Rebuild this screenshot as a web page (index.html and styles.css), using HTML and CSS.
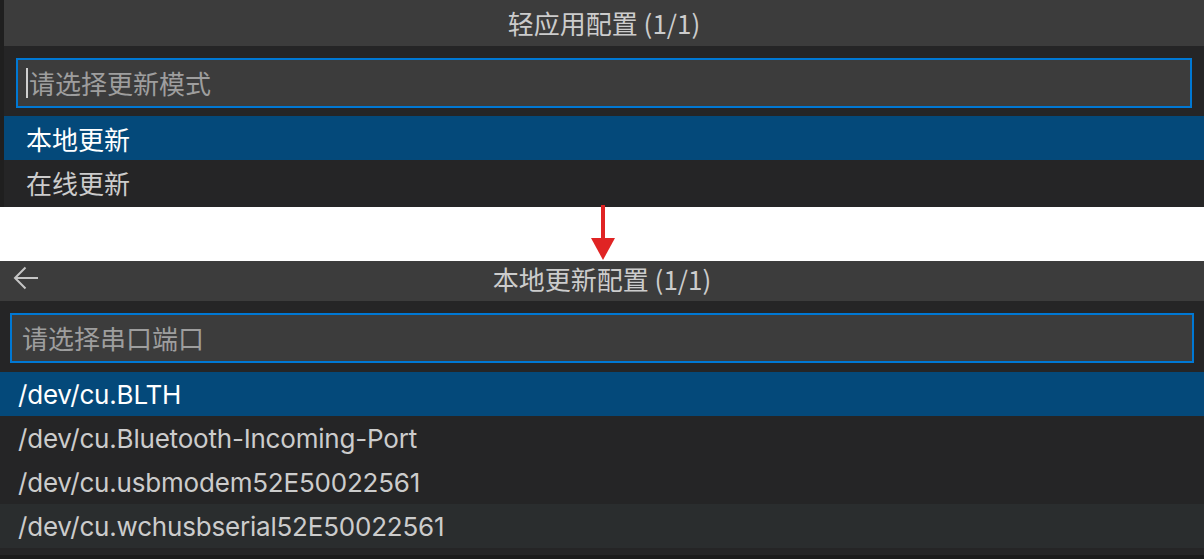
FILE: index.html
```html
<!DOCTYPE html>
<html lang="zh-CN">
<head>
<meta charset="utf-8">
<title>轻应用配置</title>
<link rel="stylesheet" href="styles.css">
</head>
<body>
<div class="stage">
  <div class="frame-top">
    <section class="panel panel-top">
      <header class="titlebar titlebar-top">
        <span class="title">轻应用配置 (1/1)</span>
      </header>
      <div class="filter filter-top">
        <div class="input">
          <span class="caret"></span>
          <span class="placeholder">请选择更新模式</span>
        </div>
      </div>
      <ul class="list">
        <li class="row selected">本地更新</li>
        <li class="row">在线更新</li>
      </ul>
    </section>
  </div>

  <div class="gap">
    <svg class="flow-arrow" width="26" height="56" viewBox="0 0 26 56" aria-hidden="true">
      <rect x="11" y="0" width="4" height="34" fill="#e02424"/>
      <polygon points="1,33 25,33 13,55" fill="#e02424"/>
    </svg>
  </div>

  <section class="panel panel-bottom">
    <header class="titlebar titlebar-bottom">
      <svg class="back" width="28" height="24" viewBox="0 0 28 24" aria-hidden="true">
        <path d="M26 12 H3 M13.5 1.5 L3 12 L13.5 22.5" fill="none" stroke="#c5c5c5" stroke-width="2" stroke-linejoin="miter"/>
      </svg>
      <span class="title">本地更新配置 (1/1)</span>
    </header>
    <div class="filter filter-bottom">
      <div class="input">
        <span class="placeholder">请选择串口端口</span>
      </div>
    </div>
    <ul class="list list-bottom">
      <li class="row row-latin selected">/dev/cu.BLTH</li>
      <li class="row row-latin">/dev/cu.Bluetooth-Incoming-Port</li>
      <li class="row row-latin">/dev/cu.usbmodem52E50022561</li>
      <li class="row row-latin hover">/dev/cu.wchusbserial52E50022561</li>
    </ul>
  </section>
</div>
</body>
</html>
```

FILE: styles.css
```css
* {
  box-sizing: border-box;
}

html, body {
  margin: 0;
  padding: 0;
  background: #ffffff;
}

body {
  width: 1204px;
  height: 559px;
  overflow: hidden;
  font-family: "Inter", "Noto Sans CJK SC", sans-serif;
  font-size: 26px;
  color: #cccccc;
}

.stage {
  display: flex;
  flex-direction: column;
  width: 1204px;
}

.frame-top {
  background: #1f1f1f;
  padding-left: 4px;
}

.panel {
  background: #252526;
  display: flex;
  flex-direction: column;
}

.panel-top {
  height: 207px;
  padding-bottom: 3px;
}

.panel-bottom {
  height: 298px;
  padding-bottom: 7px;
  border-bottom: 4px solid #1b1b1b;
}

.titlebar {
  position: relative;
  display: flex;
  align-items: center;
  justify-content: center;
  background: #3c3c3c;
  color: #cccccc;
}

.titlebar-top {
  height: 46px;
}

.titlebar-bottom {
  height: 40px;
  padding-bottom: 4px;
}

.title {
  font-family: "Noto Sans CJK SC", "Inter", sans-serif;
  line-height: 30px;
  white-space: nowrap;
}

.back {
  position: absolute;
  left: 12px;
  top: 5px;
}

.filter-top {
  padding: 12px 12px 8px;
}

.filter-bottom {
  padding: 12px 10px 9px;
}

.input {
  height: 50px;
  border: 2px solid #0078d4;
  background: #3c3c3c;
  display: flex;
  align-items: center;
  padding-left: 8px;
}

.filter-bottom .input {
  padding-left: 10px;
}

.caret {
  width: 2px;
  height: 30px;
  background: #d0d0d0;
  margin-right: 1px;
}

.placeholder {
  font-family: "Noto Sans CJK SC", sans-serif;
  color: #9e9e9e;
  line-height: 30px;
  white-space: nowrap;
}

.list {
  list-style: none;
  margin: 0;
  padding: 0;
}

.row {
  height: 44px;
  display: flex;
  align-items: center;
  padding-left: 22px;
  font-family: "Noto Sans CJK SC", sans-serif;
  color: #cccccc;
  white-space: nowrap;
}

.row-latin {
  font-family: "Inter", "Noto Sans CJK SC", sans-serif;
  padding-left: 18px;
  letter-spacing: -0.2px;
}

.row.selected {
  background: #04497a;
  color: #ffffff;
}

.row.hover {
  background: #2a2d2e;
}

.gap {
  position: relative;
  height: 54px;
  background: #ffffff;
}

.flow-arrow {
  position: absolute;
  left: 590px;
  top: -2px;
}
```
